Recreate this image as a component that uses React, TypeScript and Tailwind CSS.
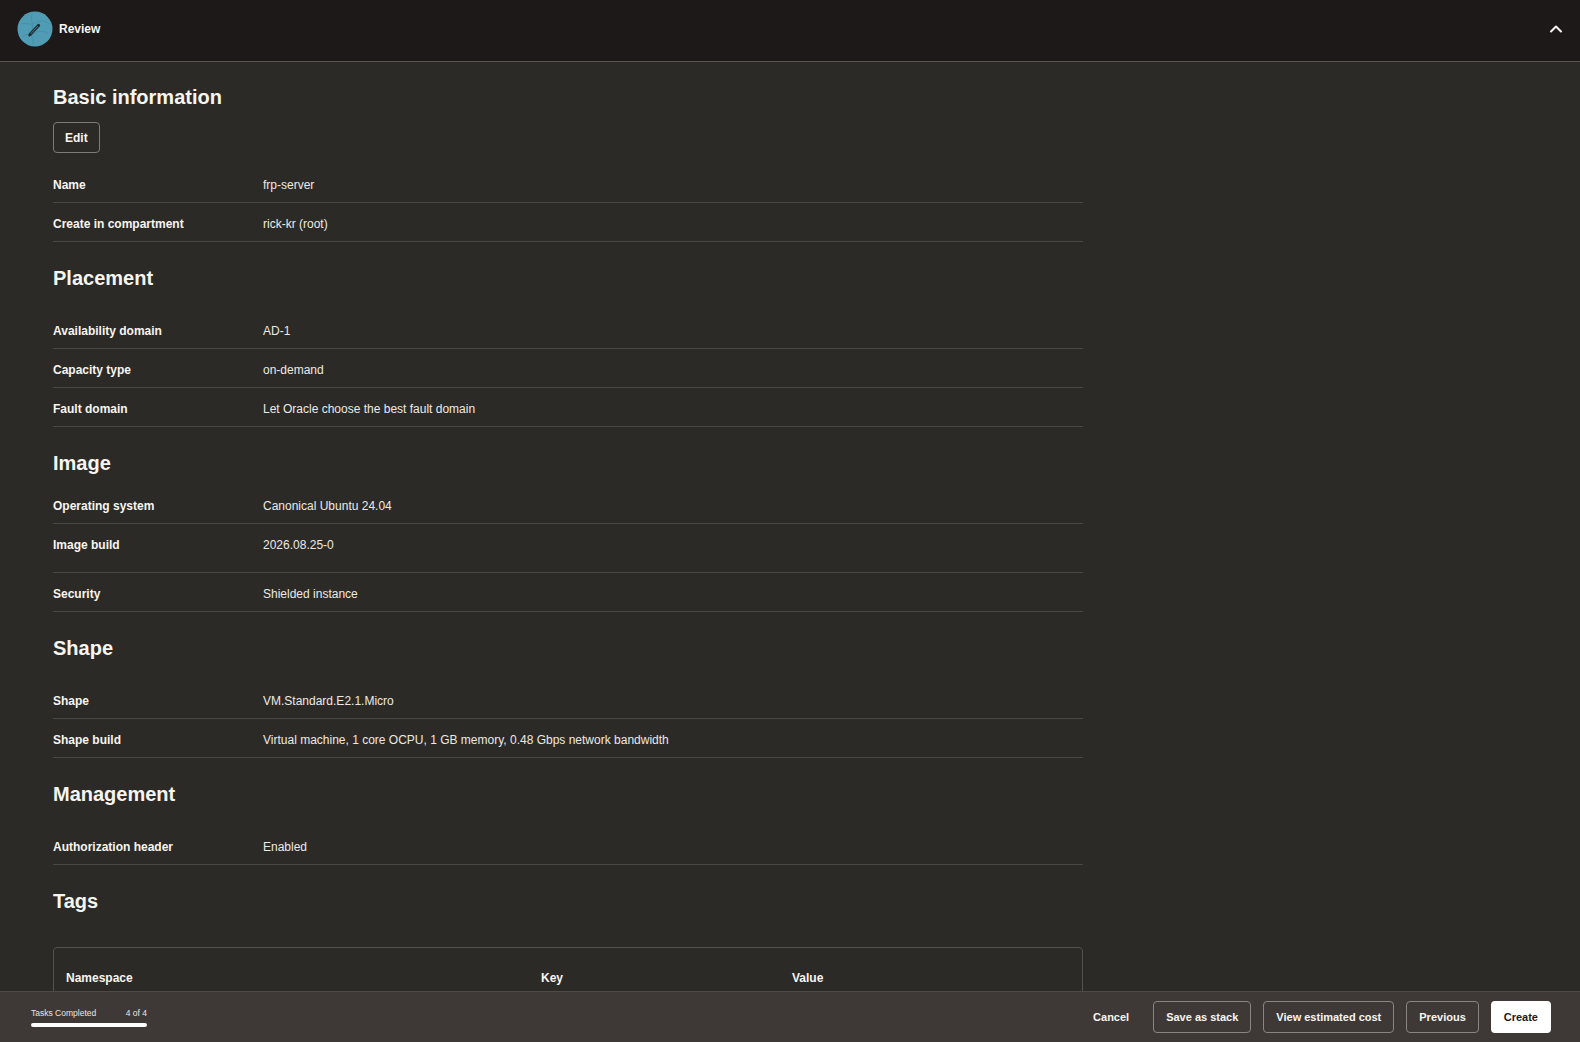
import { ChevronUp } from 'lucide-react'

type Item = { label: string; value: string; tall?: boolean }

const placement: Item[] = [
  { label: 'Availability domain', value: 'AD-1' },
  { label: 'Capacity type', value: 'on-demand' },
  { label: 'Fault domain', value: 'Let Oracle choose the best fault domain' },
]

const image: Item[] = [
  { label: 'Operating system', value: 'Canonical Ubuntu 24.04' },
  { label: 'Image build', value: '2026.08.25-0', tall: true },
  { label: 'Security', value: 'Shielded instance' },
]

const shape: Item[] = [
  { label: 'Shape', value: 'VM.Standard.E2.1.Micro' },
  {
    label: 'Shape build',
    value: 'Virtual machine, 1 core OCPU, 1 GB memory, 0.48 Gbps network bandwidth',
  },
]

function Row({ label, value, tall }: Item) {
  return (
    <div
      className={
        tall
          ? 'flex h-[49px] items-start border-b border-[#4a4744] pt-[13px] text-[12px] leading-[16px]'
          : 'flex h-[39px] items-center border-b border-[#4a4744] pt-[4px] text-[12px] leading-[16px]'
      }
    >
      <div className="w-[210px] shrink-0 font-bold text-[#f7f5f2]">{label}</div>
      <div className="text-[#ece9e5]">{value}</div>
    </div>
  )
}

function Heading({ children }: { children: string }) {
  return (
    <h2 className="text-[20px] font-bold leading-[28px] text-[#f7f5f2]">{children}</h2>
  )
}

function Section({ title, items, tight }: { title: string; items: Item[]; tight?: boolean }) {
  return (
    <section className="mt-[22px]">
      <Heading>{title}</Heading>
      <div className={tight ? 'mt-[8px]' : 'mt-[18px]'}>
        {items.map((it) => (
          <Row key={it.label} {...it} />
        ))}
      </div>
    </section>
  )
}

function ReviewIcon() {
  return (
    <svg width="36" height="36" viewBox="0 0 36 36" aria-hidden>
      <circle cx="18" cy="18" r="17.5" fill="#4f9cb4" />
      <path d="M4 13c5-2 9 2 14-1s10-3 14 1" fill="none" stroke="#428ea6" strokeWidth="0.8" />
      <path d="M6 25c4-3 8 0 12-3s9-2 13 1" fill="none" stroke="#428ea6" strokeWidth="0.8" />
      <path d="M15 3c-2 6 2 10 0 16s2 10 1 14" fill="none" stroke="#428ea6" strokeWidth="0.8" />
      <path d="M13 23.5 21.5 14.5" stroke="#1e2b30" strokeWidth="3.2" strokeLinecap="round" />
      <path d="M13.6 22.9 21 15" stroke="#5b9fb3" strokeWidth="0.7" />
      <path d="M12.2 24.8 13 23.5" stroke="#1e2b30" strokeWidth="1.4" strokeLinecap="round" />
    </svg>
  )
}

export default function App() {
  return (
    <div className="flex h-screen flex-col overflow-hidden bg-[#2c2a26] font-['Liberation_Sans',Arial,sans-serif]">
      <header className="flex h-[62px] shrink-0 items-center justify-between border-b border-[#57534f] bg-[#1c1918] pb-[4px] pl-[17px] pr-[14px]">
        <div className="flex items-center gap-[6px]">
          <ReviewIcon />
          <span className="text-[12px] font-bold text-[#f7f5f2]">Review</span>
        </div>
        <ChevronUp size={20} strokeWidth={2.5} className="text-[#f2f0ed]" />
      </header>

      <main className="flex-1 overflow-hidden">
        <div className="box-content w-[1030px] pb-[60px] pl-[53px] pt-[21px]">
          <Heading>Basic information</Heading>
          <button
            type="button"
            className="mt-[11px] h-[31px] rounded-[4px] border border-[#7f7b77] px-[11px] text-[12px] font-bold text-[#f7f5f2]"
          >
            Edit
          </button>
          <div className="mt-[11px]">
            <Row label="Name" value="frp-server" />
            <Row label="Create in compartment" value="rick-kr (root)" />
          </div>

          <Section title="Placement" items={placement} />
          <Section title="Image" items={image} tight />
          <Section title="Shape" items={shape} />
          <Section
            title="Management"
            items={[{ label: 'Authorization header', value: 'Enabled' }]}
          />

          <section className="mt-[22px]">
            <Heading>Tags</Heading>
            <div className="mt-[32px] rounded-[4px] border border-[#55514d]">
              <div className="flex px-[12px] pb-[12px] pt-[22px] text-[12px] font-bold leading-[16px] text-[#f7f5f2]">
                <div className="w-[475px]">Namespace</div>
                <div className="w-[251px]">Key</div>
                <div>Value</div>
              </div>
              <div className="border-t border-[#4a4744] px-[12px] py-[12px] text-[12px] text-[#ece9e5]">
                No tags
              </div>
            </div>
          </section>
        </div>
      </main>

      <footer className="flex h-[51px] shrink-0 items-center justify-between border-t border-[#4f4a46] bg-[#3e3936] pl-[31px] pr-[29px]">
        <div className="flex w-[116px] flex-col gap-[4px]">
          <div className="flex items-center justify-between whitespace-nowrap text-[8.5px] leading-[12px] text-[#e9e6e2]">
            <span>Tasks Completed</span>
            <span>4 of 4</span>
          </div>
          <div className="h-[4px] rounded-full bg-white" />
        </div>
        <div className="flex items-center gap-[12px] text-[11px] font-bold">
          <button type="button" className="h-[32px] px-[12px] text-[#f7f5f2]">
            Cancel
          </button>
          <button
            type="button"
            className="h-[32px] rounded-[4px] border border-[#8a8581] px-[12px] text-[#f7f5f2]"
          >
            Save as stack
          </button>
          <button
            type="button"
            className="h-[32px] rounded-[4px] border border-[#8a8581] px-[12px] text-[#f7f5f2]"
          >
            View estimated cost
          </button>
          <button
            type="button"
            className="h-[32px] rounded-[4px] border border-[#8a8581] px-[12px] text-[#f7f5f2]"
          >
            Previous
          </button>
          <button
            type="button"
            className="h-[32px] rounded-[4px] bg-white px-[13px] text-[#1c1918]"
          >
            Create
          </button>
        </div>
      </footer>
    </div>
  )
}
